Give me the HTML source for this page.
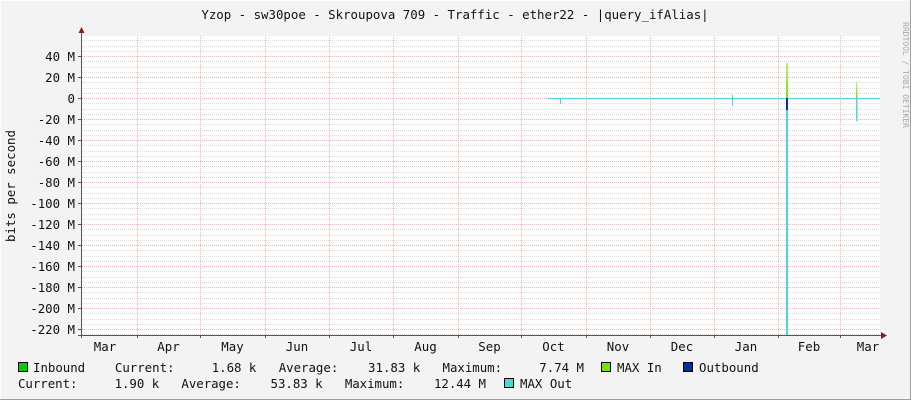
<!DOCTYPE html>
<html><head><style>
html,body{margin:0;padding:0;background:#f3f3f3}
svg{display:block}
text{font-family:"DejaVu Sans Mono","Liberation Mono",monospace;font-size:12.4px;fill:#111}
</style></head><body>
<svg width="911" height="400" xmlns="http://www.w3.org/2000/svg">
<rect width="911" height="400" fill="#f3f3f3"/>
<line x1="0" y1="0.5" x2="911" y2="0.5" stroke="#fcfcfc"/>
<line x1="0.5" y1="0" x2="0.5" y2="400" stroke="#fcfcfc"/>
<line x1="910.5" y1="0" x2="910.5" y2="400" stroke="#9e9e9e"/>
<line x1="0" y1="399.5" x2="911" y2="399.5" stroke="#9e9e9e"/>
<rect x="81" y="36" width="799" height="299" fill="#fff"/>
<g stroke="#dcdcdc" stroke-dasharray="1,1" stroke-width="1">
<path id="minor" d=""/>
</g>
<g id="grid"></g>
<text x="455" y="19" text-anchor="middle">Yzop - sw30poe - Skroupova 709 - Traffic - ether22 - |query_ifAlias|</text>
<text transform="translate(15,186) rotate(-90)" text-anchor="middle">bits per second</text>
<text transform="translate(903,75) rotate(90)" text-anchor="middle" style="font-size:8px;fill:#aaa">RRDTOOL / TOBI OETIKER</text>
<g id="ylab" text-anchor="end"></g>
<g id="xlab" text-anchor="middle"></g>
<line x1="548" y1="98.5" x2="880" y2="98.5" stroke="#4fd5d5" stroke-width="1"/>
<line x1="560.5" y1="98" x2="560.5" y2="104" stroke="#4fd5d5"/>
<line x1="732.5" y1="95" x2="732.5" y2="98" stroke="#7ce000"/>
<line x1="732.5" y1="98" x2="732.5" y2="106" stroke="#4fd5d5"/>
<path d="M786 98 L786.5 63 L787.5 63 L788 98Z" fill="#7ce000"/>
<rect x="786" y="98" width="2" height="12" fill="#0030a0"/>
<rect x="786" y="110" width="2" height="225" fill="#4fd5d5"/>
<path d="M856 98 L856.5 82 L857 82 L857.5 98Z" fill="#7ce000"/>
<rect x="856" y="98" width="1.5" height="23" fill="#4fd5d5"/>
<line x1="81.5" y1="32" x2="81.5" y2="338" stroke="#555"/>
<line x1="78" y1="335.5" x2="884" y2="335.5" stroke="#555"/>
<path d="M78.5 33 L84.5 33 L81.5 27Z" fill="#8b1a1a"/>
<path d="M881 332 L881 339 L887 335.5Z" fill="#8b1a1a"/>
<rect x="18.5" y="362.5" width="9" height="9" fill="#00cc00" stroke="#000"/>
<text x="33" y="372" xml:space="preserve" textLength="551">Inbound    Current:     1.68 k   Average:    31.83 k   Maximum:     7.74 M</text>
<rect x="601.5" y="362.5" width="9" height="9" fill="#7ce000" stroke="#000"/>
<text x="617" y="372">MAX In</text>
<rect x="683.5" y="362.5" width="9" height="9" fill="#0030a0" stroke="#000"/>
<text x="699" y="372">Outbound</text>
<text x="18" y="388" xml:space="preserve" textLength="468">Current:     1.90 k   Average:    53.83 k   Maximum:    12.44 M</text>
<rect x="504.5" y="378.5" width="9" height="9" fill="#4fd5d5" stroke="#000"/>
<text x="520" y="388">MAX Out</text>
</svg>
<script>
var ns="http://www.w3.org/2000/svg";
var g=document.getElementById("grid"),m=document.getElementById("minor"),yl=document.getElementById("ylab"),xl=document.getElementById("xlab");
var d="";
for(var v=-230;v<=55;v+=5){var y=98-v*1.05;if(y<36||y>335)continue;y=Math.round(y)+0.5;if(v%20!==0)d+="M82 "+y+"H880";}
m.setAttribute("d",d);
function ln(x1,y1,x2,y2,c,da){var l=document.createElementNS(ns,"line");l.setAttribute("x1",x1);l.setAttribute("y1",y1);l.setAttribute("x2",x2);l.setAttribute("y2",y2);l.setAttribute("stroke",c);if(da)l.setAttribute("stroke-dasharray",da);g.appendChild(l);}
for(var v=-220;v<=40;v+=20){var y=Math.round(98-v*1.05)+0.5;ln(82,y,880,y,"#f4b4b4","1,1");ln(78,y,81,y,"#555");var t=document.createElementNS(ns,"text");t.setAttribute("x",75);t.setAttribute("y",y+4.5);t.textContent=v===0?"0":v+" M";yl.appendChild(t);}
var mx=[74,137,200,265,329,393,458,521,586,650,714,778,840,904];
var names=["Mar","Apr","May","Jun","Jul","Aug","Sep","Oct","Nov","Dec","Jan","Feb","Mar"];
for(var i=1;i<13;i++){ln(mx[i]+0.5,36,mx[i]+0.5,335,"#f4b4b4","1,1");ln(mx[i]+0.5,335,mx[i]+0.5,338,"#555");}
for(var i=0;i<13;i++){var t=document.createElementNS(ns,"text");var cx=i==0?105:(i==12?868:(mx[i]+mx[i+1])/2);t.setAttribute("x",cx);t.setAttribute("y",351);t.textContent=names[i];xl.appendChild(t);}
</script>
</body></html>
